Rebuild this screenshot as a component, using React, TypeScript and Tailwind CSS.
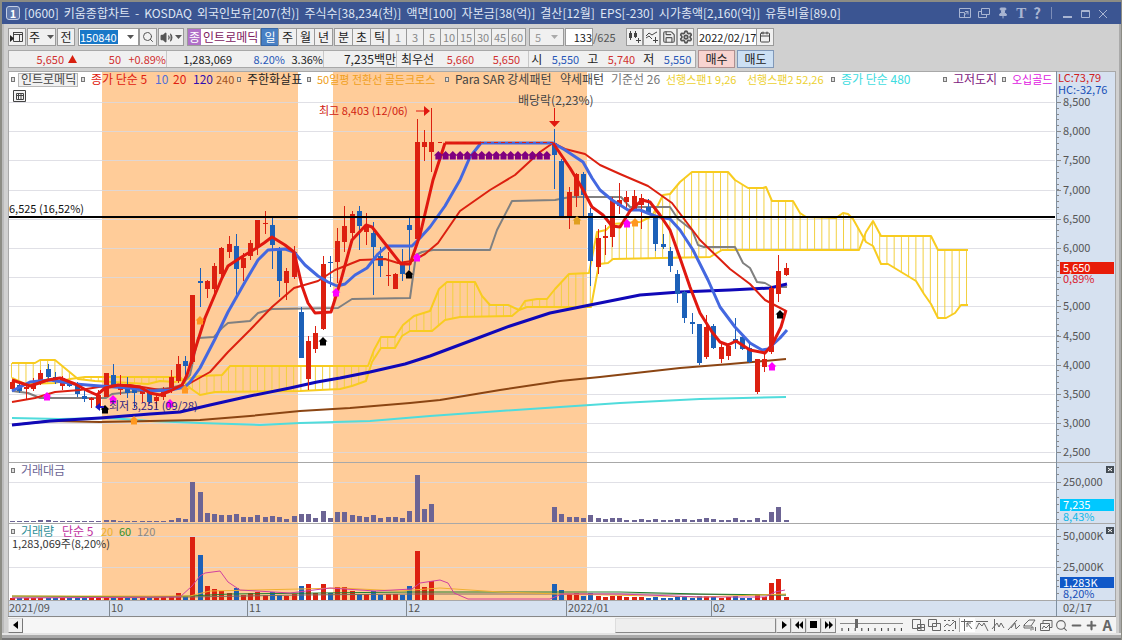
import React from 'react';
import { Search, Save, Settings, Calendar, Volume2, Minus, Plus, Pin } from 'lucide-react';

type Candle = [index: number, high: number, top: number, bottom: number, low: number, up: 0 | 1];
type Point = [number, number];

const UP = '#dc2010';
const DOWN = '#1c60b8';
const STEP = 7.235;
const xAt = (i: number) => 11.5 + i * STEP;

const candles: Candle[] = [
  [0, 380, 382, 389, 391, 1], [1, 384, 385, 391, 393, 0], [2, 383, 387, 389, 399, 1], [3, 378, 384, 389, 391, 1],
  [4, 370, 373, 383, 385, 1], [5, 364, 369, 377, 381, 0], [6, 372, 377, 381, 384, 0], [7, 376, 378, 386, 390, 1],
  [8, 382, 384, 386, 387, 0], [9, 382, 383, 394, 397, 0], [10, 390, 396, 399, 402, 0], [11, 397, 398, 400, 408, 1],
  [12, 390, 395, 407, 408, 1], [13, 373, 373, 397, 397, 1], [14, 364, 375, 387, 388, 0], [15, 375, 388, 390, 395, 1],
  [16, 377, 386, 393, 398, 0], [17, 385, 387, 393, 408, 0], [18, 388, 389, 394, 403, 1], [19, 388, 390, 402, 404, 0],
  [20, 393, 397, 401, 408, 1], [21, 387, 390, 397, 400, 1], [22, 370, 377, 391, 393, 1], [23, 356, 364, 381, 383, 1],
  [24, 356, 361, 366, 378, 0], [25, 295, 295, 362, 364, 1], [26, 268, 281, 283, 307, 0], [27, 280, 281, 289, 298, 1],
  [28, 263, 266, 289, 297, 1], [29, 247, 248, 274, 280, 1], [30, 236, 244, 252, 258, 1], [31, 234, 246, 269, 295, 0],
  [32, 253, 258, 268, 281, 1], [33, 240, 243, 256, 260, 1], [34, 220, 220, 247, 255, 1], [35, 211, 223, 224, 234, 1],
  [36, 217, 225, 245, 269, 0], [37, 247, 249, 281, 297, 0], [38, 268, 271, 283, 300, 1], [39, 246, 252, 277, 279, 1],
  [40, 307, 312, 358, 358, 0], [41, 336, 341, 379, 390, 1], [42, 326, 333, 349, 353, 1], [43, 256, 264, 329, 330, 1],
  [44, 256, 262, 263, 287, 0], [45, 228, 241, 262, 283, 1], [46, 206, 226, 242, 252, 1], [47, 211, 214, 233, 238, 1],
  [48, 206, 211, 226, 250, 0], [49, 213, 225, 232, 245, 1], [50, 222, 233, 247, 295, 0], [51, 247, 256, 266, 277, 0],
  [52, 252, 275, 276, 286, 1], [53, 273, 274, 289, 289, 1], [54, 249, 264, 274, 281, 0], [55, 218, 225, 230, 270, 0],
  [56, 119, 142, 239, 241, 1], [57, 130, 142, 147, 161, 1], [58, 108, 142, 152, 172, 1], [75, 129, 143, 155, 189, 0],
  [76, 159, 161, 217, 218, 0], [77, 187, 192, 217, 229, 1], [78, 173, 174, 196, 207, 1], [79, 172, 174, 195, 217, 0],
  [80, 208, 213, 261, 286, 0], [81, 229, 238, 267, 274, 1], [82, 225, 236, 238, 255, 1], [83, 197, 200, 237, 247, 1],
  [84, 183, 200, 206, 214, 1], [85, 191, 197, 202, 208, 1], [86, 190, 196, 209, 210, 1], [87, 194, 198, 205, 229, 1],
  [88, 199, 207, 214, 215, 0], [89, 215, 218, 244, 251, 0], [90, 234, 244, 247, 249, 0], [91, 247, 251, 266, 272, 0],
  [92, 270, 274, 294, 303, 0], [93, 291, 292, 318, 323, 0], [94, 313, 322, 324, 334, 0], [95, 324, 324, 363, 365, 0],
  [96, 315, 327, 357, 359, 1], [97, 324, 326, 348, 349, 0], [98, 342, 347, 359, 363, 1], [99, 343, 346, 356, 360, 1],
  [100, 318, 339, 341, 349, 0], [101, 335, 337, 349, 350, 0], [102, 343, 348, 362, 363, 0], [103, 359, 359, 392, 394, 1],
  [104, 353, 359, 367, 372, 1], [105, 286, 288, 352, 354, 1], [106, 255, 271, 294, 302, 1], [107, 263, 268, 275, 276, 1],
];

// bar heights, one for each candle
const amounts = [
  1, 1, 1, 1, 2, 2, 1, 1, 1, 1, 1, 1, 1, 2, 2, 1, 1, 1, 1, 1, 1, 1, 2, 4, 3, 40, 30, 9, 8, 7, 7, 8, 5, 5, 7, 5, 6, 5, 3, 6,
  8, 8, 4, 11, 4, 10, 10, 7, 6, 5, 7, 4, 5, 5, 4, 11, 47, 13, 18, 15, 8, 5, 5, 4, 7, 4, 3, 4, 4, 2, 2, 3, 2, 3, 2, 2, 3, 3,
  2, 3, 4, 3, 2, 2, 4, 2, 2, 4, 2, 10, 15, 2,
];
const volumes = [
  2, 2, 2, 2, 2, 2, 2, 2, 2, 2, 2, 2, 2, 2, 2, 2, 2, 2, 2, 2, 2, 3, 3, 7, 4, 63, 45, 14, 11, 9, 7, 12, 5, 7, 8, 5, 8, 5, 4, 6,
  14, 16, 7, 16, 7, 13, 13, 9, 6, 6, 9, 5, 6, 6, 5, 14, 49, 13, 19, 16, 10, 6, 7, 4, 7, 4, 3, 4, 4, 3, 3, 3, 2, 3, 2, 2, 4, 4,
  2, 4, 4, 3, 2, 3, 4, 2, 2, 6, 3, 17, 21, 3,
];

const ma5: Point[] = [[12, 380], [30, 386], [48, 380], [60, 378], [75, 384], [88, 391], [97, 395], [105, 388], [118, 385], [140, 387], [150, 393], [160, 395], [170, 391], [182, 385], [187, 375], [200, 334], [205, 318], [222, 278], [228, 266], [240, 258], [255, 249], [264, 243], [272, 237], [285, 245], [294, 252], [302, 286], [308, 303], [315, 313], [331, 312], [341, 280], [352, 240], [366, 225], [372, 227], [390, 250], [401, 264], [410, 264], [420, 235], [433, 180], [445, 143], [553, 143], [570, 168], [582, 188], [592, 207], [603, 215], [612, 226], [620, 227], [630, 211], [642, 200], [650, 202], [660, 215], [670, 230], [680, 258], [690, 287], [700, 313], [712, 332], [720, 342], [728, 345], [736, 341], [750, 350], [765, 353], [772, 345], [781, 327], [786, 310]];
const ma10: Point[] = [[12, 391], [30, 382], [50, 380], [75, 384], [100, 386], [130, 388], [150, 391], [170, 390], [185, 387], [190, 382], [200, 368], [215, 339], [228, 312], [245, 282], [258, 260], [268, 250], [285, 249], [294, 252], [305, 265], [318, 276], [328, 282], [337, 286], [345, 284], [355, 275], [367, 268], [378, 254], [387, 246], [412, 246], [420, 238], [430, 227], [445, 206], [460, 180], [470, 157], [481, 143], [553, 143], [565, 150], [583, 162], [592, 178], [600, 190], [612, 200], [628, 210], [640, 210], [655, 216], [670, 219], [680, 230], [693, 250], [708, 280], [720, 307], [735, 327], [750, 343], [762, 350], [768, 349], [780, 338], [787, 330]];
const ma20: Point[] = [[12, 402], [35, 398], [55, 392], [80, 390], [105, 386], [130, 385], [160, 390], [185, 386], [210, 372], [228, 352], [250, 330], [272, 307], [294, 288], [318, 281], [335, 270], [360, 260], [385, 259], [398, 263], [412, 261], [425, 254], [438, 243], [460, 211], [490, 190], [515, 175], [540, 152], [553, 143], [565, 149], [585, 154], [600, 165], [620, 174], [648, 186], [672, 203], [700, 240], [730, 269], [750, 284], [765, 300], [786, 311]];
const ma120: Point[] = [[12, 425], [50, 421], [100, 418], [150, 414], [180, 412], [210, 405], [250, 396], [290, 388], [317, 382], [340, 378], [370, 372], [405, 364], [430, 356], [470, 341], [510, 326], [550, 313], [600, 303], [640, 295], [680, 292], [730, 290], [770, 288], [787, 284]];
const ma240: Point[] = [[12, 425], [50, 421], [100, 422], [150, 421], [200, 420], [250, 416], [300, 411], [350, 408], [410, 403], [440, 400], [500, 390], [560, 381], [600, 377], [680, 368], [730, 364], [786, 359]];
const ma480: Point[] = [[12, 418], [60, 419], [110, 418], [150, 421], [200, 423], [260, 425], [300, 423], [370, 421], [430, 416], [500, 411], [560, 407], [620, 403], [700, 399], [786, 397]];
const baseLine: Point[] = [[12, 391], [28, 393], [40, 398], [106, 398], [112, 394], [140, 391], [170, 388], [182, 385], [190, 375], [198, 338], [214, 337], [222, 328], [228, 323], [250, 321], [258, 313], [272, 309], [338, 308], [352, 299], [410, 298], [416, 255], [422, 252], [433, 250], [490, 250], [497, 230], [512, 201], [555, 200], [570, 197], [621, 197], [630, 207], [670, 207], [678, 219], [692, 230], [698, 245], [704, 247], [735, 247], [743, 263], [750, 268], [757, 282], [765, 283], [772, 287], [787, 287]];
const spanA: Point[] = [[12, 363], [35, 363], [40, 360], [55, 360], [78, 379], [95, 381], [148, 384], [160, 381], [175, 382], [187, 379], [200, 376], [222, 375], [230, 366], [368, 366], [374, 350], [381, 337], [395, 337], [403, 325], [414, 316], [430, 311], [439, 289], [447, 282], [475, 282], [482, 296], [490, 305], [508, 305], [519, 310], [525, 301], [537, 299], [547, 299], [555, 289], [569, 274], [589, 273], [597, 232], [606, 230], [612, 224], [640, 222], [652, 216], [658, 205], [663, 195], [670, 194], [680, 182], [692, 172], [728, 172], [735, 180], [748, 188], [763, 188], [766, 187], [772, 201], [793, 201], [800, 213], [806, 217], [836, 218], [843, 213], [848, 214], [853, 219], [866, 242], [873, 246], [881, 264], [888, 264], [916, 281], [924, 294], [931, 304], [938, 318], [946, 318], [955, 313], [961, 305], [968, 305]];
const spanB: Point[] = [[12, 378], [25, 384], [55, 383], [70, 379], [85, 377], [180, 377], [190, 388], [200, 395], [215, 392], [300, 391], [340, 389], [352, 386], [366, 381], [372, 362], [381, 348], [395, 348], [402, 336], [410, 331], [432, 331], [445, 320], [460, 317], [512, 316], [519, 310], [527, 307], [591, 307], [599, 264], [608, 263], [613, 259], [710, 257], [722, 250], [859, 250], [866, 232], [873, 221], [881, 236], [931, 236], [938, 250], [968, 250]];

const volMa5: Point[] = [[12, 598], [180, 597], [192, 586], [200, 576], [205, 573], [220, 571], [228, 582], [240, 590], [290, 593], [330, 588], [375, 591], [412, 589], [420, 583], [440, 580], [448, 583], [454, 593], [468, 599], [550, 599], [562, 594], [620, 594], [700, 597], [765, 597], [775, 592], [785, 590]];
const volMa20: Point[] = [[12, 596], [190, 596], [210, 591], [300, 589], [340, 588], [400, 591], [440, 588], [500, 592], [560, 594], [700, 597], [786, 594]];
const volMa60: Point[] = [[12, 596], [150, 597], [190, 596], [230, 594], [410, 592], [500, 592], [620, 592], [700, 594], [786, 595]];
const volMa120: Point[] = [[12, 597], [190, 597], [300, 595], [410, 594], [560, 594], [650, 594], [786, 595]];

const yOn = (line: Point[], x: number) => {
  for (let i = 1; i < line.length; i++) {
    const [x0, y0] = line[i - 1];
    const [x1, y1] = line[i];
    if (x <= x1) return y0 + ((y1 - y0) * (x - x0)) / (x1 - x0);
  }
  return line[line.length - 1][1];
};

const prices = ['8,500', '8,000', '7,500', '7,000', '6,500', '6,000', '5,500', '5,000', '4,500', '4,000', '3,500', '3,000', '2,500'];
const priceY = (i: number) => 102 + i * 29.2;

const legend: [number, string, string][] = [
  [21, '인트로메딕', '#444'], [91, '종가 단순 5', '#e02010'], [155, '10', '#5070d8'], [173, '20', '#e02010'], [193, '120', '#3010b0'],
  [247, '주한화살표', '#222'], [455, 'Para SAR 강세패턴', '#444'], [560, '약세패턴', '#444'], [611, '기준선 26', '#777'],
  [841, '종가 단순 480', '#40dce0'], [953, '고저도지', '#802080'],
];
const smallLegend: [number, string, string][] = [
  [216, '240', '#a05020'], [317, '50일평 전환선 골든크로스', '#f0a020'], [666, '선행스팬1 9,26', '#ecd030'],
  [747, '선행스팬2 52,26', '#ecd030'], [1012, '오십골드', '#e020e0'],
];
const legendBoxes = [13, 83, 239, 309, 447, 833, 945, 1004];

const arrows: [number, number, string][] = [
  [105, 409, '#000'], [323, 341, '#000'], [409, 274, '#000'], [780, 314, '#000'],
  [47, 396, '#ff00ff'], [113, 399, '#ff00ff'], [170, 403, '#ff00ff'], [336, 292, '#ff00ff'], [417, 257, '#ff00ff'], [627, 223, '#ff00ff'], [772, 366, '#ff00ff'],
  [134, 420, '#ff9820'], [200, 320, '#ff9820'], [185, 389, '#ff9820'], [577, 220, '#e0a020'], [635, 222, '#ff9820'],
];

function Line({ points, color, width = 1 }: { points: Point[]; color: string; width?: number }) {
  return <polyline points={points.map(p => p.join(',')).join(' ')} fill="none" stroke={color} strokeWidth={width} strokeLinejoin="round" />;
}

function UpArrow({ x, y, color }: { x: number; y: number; color: string }) {
  return <path d={`M${x} ${y - 4}l4.500 4.500h-1.500v4h-6v-4h-1.500z`} fill={color} />;
}

function Chart() {
  return (
    <svg viewBox="8 71 1108 546" className="block h-auto w-full text-[11px]" role="img" aria-label="인트로메딕 일봉 차트">
      <g shapeRendering="crispEdges">
        <rect x="8" y="71" width="1048" height="530" fill="#fff" />
        <rect x="102" y="71" width="196" height="530" fill="#ffcc99" />
        <rect x="333" y="71" width="254" height="530" fill="#ffcc99" />
        <rect x="1056" y="71" width="60" height="546" fill="#d6e1f0" />
        <rect x="8" y="601" width="1108" height="16" fill="#d6e1f0" />
        {prices.map((p, i) => (
          <rect key={p} x="8" y={Math.round(priceY(i))} width="1047" height="1" fill="#d8d8e0" opacity="0.8" />
        ))}
        {[482, 536, 567].map(y => (
          <rect key={y} x="8" y={y} width="1047" height="1" fill="#d8d8e0" opacity="0.8" />
        ))}
      </g>

      {Array.from({ length: 133 }, (_, i) => xAt(i)).filter(x => x <= 969).map(x => (
        <path key={x} d={`M${x} ${yOn(spanA, x)}V${yOn(spanB, x)}`} stroke="#f2d040" strokeWidth="1" />
      ))}
      <Line points={spanA} color="#f8cc20" width={2} />
      <Line points={spanB} color="#f8cc20" width={2} />
      <Line points={baseLine} color="#808080" width={2} />
      <Line points={ma480} color="#50dcdc" width={2} />
      <Line points={ma240} color="#8b4513" width={2} />
      <Line points={ma120} color="#1008b8" width={3} />

      <g shapeRendering="crispEdges">
        {candles.map(([i, high, top, bottom, low, up]) => {
          const x = Math.round(xAt(i));
          return (
            <g key={i} fill={up ? UP : DOWN}>
              <rect x={x} y={high} width="1" height={low - high} />
              <rect x={x - 2} y={top} width="5" height={bottom - top} />
            </g>
          );
        })}
      </g>
      <Line points={ma20} color={UP} width={2} />
      <Line points={ma10} color="#4468e0" width={3} />
      <Line points={ma5.filter(([x]) => x <= 445)} color="#e01810" width={3} />
      <Line points={ma5.filter(([x]) => x >= 553)} color="#e01810" width={3} />
      <path d="M445 143h36" stroke="#e01810" strokeWidth="3" />
      <path d="M438 142.500h115" stroke={UP} strokeDasharray="4 3" />
      <rect x="8" y="216" width="1047" height="2" fill="#000" />

      {arrows.map(([x, y, color]) => <UpArrow key={`${x}-${y}`} x={x} y={y} color={color} />)}
      {Array.from({ length: 16 }, (_, i) => <UpArrow key={i} x={xAt(59 + i)} y={155} color="#800080" />)}
      <path d="M95 407l5-4v3h4v2h-4v3z" fill="#2018c0" />
      <path d="M416 110.500h8v-4.500l6 5-6 5v-4.500h-8z" fill="#e01810" />
      <path d="M554 108h1v13h5l-5.500 6-5.500-6h5z" fill="#e01810" />

      <text x="319" y="115" fill="#d02010">최고 8,403 (12/06)</text>
      <text x="109" y="410" fill="#302080">최저 3,251 (09/28)</text>
      <text x="518" y="105" fill="#444" className="text-[12px]">배당락(2,23%)</text>
      <text x="9" y="213" fill="#111">6,525 (16,52%)</text>

      <rect x="18.500" y="73.500" width="59" height="13" fill="#f0f0f0" stroke="#b8b8b8" />
      <g className="text-[12px]">
        {legend.map(([x, label, color]) => <text key={x} x={x} y="84" fill={color}>{label}</text>)}
      </g>
      {smallLegend.map(([x, label, color]) => <text key={x} x={x} y="84" fill={color}>{label}</text>)}
      {legendBoxes.map(x => <rect key={x} x={x - 1.500} y="77.500" width="3" height="4" fill="#ddd" stroke="#777" />)}
      <path d="M13.500 90.500h12v11h-12zM16.500 93.500h7v6h-7zM18.500 93v6M21 93v6M16 95.500h7" fill="#f4f4f4" stroke="#444" />

      <g shapeRendering="crispEdges">
        {candles.map(([i, , , , , up], n) => {
          const x = Math.round(xAt(i)) - 2;
          return (
            <g key={i}>
              <rect x={x} y={522 - amounts[n]} width="5" height={amounts[n]} fill="#6c6494" />
              <rect x={x} y={600 - volumes[n]} width="5" height={volumes[n]} fill={up ? UP : DOWN} />
            </g>
          );
        })}
      </g>
      <Line points={volMa120} color="#807060" />
      <Line points={volMa60} color="#208030" />
      <Line points={volMa20} color="#f0b030" />
      <Line points={volMa5} color="#d040a0" />

      <rect x="11.500" y="468.500" width="3" height="4" fill="#ddd" stroke="#777" />
      <rect x="11.500" y="529.500" width="3" height="4" fill="#ddd" stroke="#777" />
      <g className="text-[12px]">
        <text x="21" y="475" fill="#6c6494">거래대금</text>
        <text x="21" y="536" fill="#309098">거래량</text>
        <text x="62" y="536" fill="#c030a0">단순 5</text>
      </g>
      <text x="101" y="536" fill="#e8b030">20</text>
      <text x="119" y="536" fill="#309030">60</text>
      <text x="137" y="536" fill="#888">120</text>
      <text x="12" y="548" fill="#333">1,283,069주(8,20%)</text>

      <g shapeRendering="crispEdges" fill="#a8a8a8">
        <rect x="8" y="71" width="1108" height="1" />
        <rect x="8" y="71" width="1" height="546" />
        <rect x="8" y="462" width="1108" height="1" />
        <rect x="8" y="523" width="1108" height="1" />
        <rect x="8" y="600" width="1108" height="1" />
        <rect x="1056" y="71" width="1" height="546" fill="#8090a0" />
        <rect x="1115" y="71" width="1" height="546" />
        <rect x="8" y="616" width="1108" height="1" fill="#888" />
        {[109, 247, 406, 566, 711].map(x => <rect key={x} x={x} y="601" width="1" height="16" fill="#808890" />)}
        {prices.map((p, i) => <rect key={p} x="1057" y={Math.round(priceY(i))} width="4" height="1" fill="#888" />)}
        {Array.from({ length: 62 }, (_, i) => <rect key={i} x="1057" y={Math.round(96 + i * 5.84)} width="2" height="1" fill="#888" />)}
        {[467, 474, 489, 497, 504, 512, 519, 529, 543, 549, 555, 561, 574, 580, 586, 593].map(y => <rect key={y} x="1057" y={y} width="2" height="1" fill="#888" />)}
        {[482, 536, 567].map(y => <rect key={y} x="1057" y={y} width="4" height="1" fill="#888" />)}
      </g>

      <g fill="#555">
        <text x="1058" y="82" fill="#d02020">LC:73,79</text>
        <text x="1058" y="94" fill="#1850b8">HC:-32,76</text>
        {prices.map((p, i) => p !== '5,500' && <text key={p} x="1063" y={priceY(i) + 4}>{p}</text>)}
        <rect x="1060" y="262" width="54" height="12" fill="#e81c08" />
        <text x="1063" y="272" fill="#fff">5,650</text>
        <text x="1063" y="283" fill="#d82030">0,89%</text>
        <text x="1063" y="486">250,000</text>
        <rect x="1060" y="499" width="54" height="12" fill="#00c8ff" />
        <text x="1063" y="509" fill="#fff">7,235</text>
        <text x="1063" y="521" fill="#10b8e8">8,43%</text>
        <text x="1063" y="540">50,000K</text>
        <text x="1063" y="571">25,000K</text>
        <rect x="1060" y="577" width="54" height="11" fill="#1058c8" />
        <text x="1063" y="587" fill="#fff">1,283K</text>
        <text x="1063" y="598" fill="#1850b8">8,20%</text>
        <text x="1063" y="612">02/17</text>
        <text x="9" y="612">2021/09</text>
        <text x="111" y="612">10</text>
        <text x="249" y="612">11</text>
        <text x="408" y="612">12</text>
        <text x="568" y="612">2022/01</text>
        <text x="713" y="612">02</text>
      </g>
      {[466, 527].map(y => (
        <g key={y}>
          <rect x="1106" y={y} width="8" height="7" fill="#444c54" />
          <path d={`M1108 ${y + 2}l4 3m0 -3l-4 3`} stroke="#fff" />
        </g>
      ))}
    </svg>
  );
}

const box = 'flex h-[18px] items-center justify-center border border-[#9a9a9a] bg-[#f0f0f0]';

const titleParts = [
  '[0600]', '키움종합차트', '-', 'KOSDAQ', '외국인보유[207(천)]', '주식수[38,234(천)]', '액면[100]', '자본금[38(억)]',
  '결산[12월]', 'EPS[-230]', '시가총액[2,160(억)]', '유통비율[89.0]',
];

function Arrow() {
  return <svg viewBox="0 0 7 4" className="h-1 w-[7px] shrink-0"><path d="M0 0h7L3.500 4z" fill="#555" /></svg>;
}

function TitleBar() {
  return (
    <header className="flex h-[22px] items-center bg-[#3b5592] pr-3 pl-1 text-[#dfe6f4]">
      <span className="mr-1 flex size-[14px] items-center justify-center rounded-[3px] border border-[#c4cee4] bg-[#6078ac] text-[11px] font-bold text-white">1</span>
      <h1 className="flex grow gap-[5px] overflow-hidden whitespace-nowrap">
        {titleParts.map(part => <span key={part}>{part}</span>)}
      </h1>
      <div className="flex items-center gap-[7px] text-[#a9b5d2]">
        <button aria-label="크기"><svg viewBox="0 0 12 12" className="size-3" fill="none" stroke="currentColor"><path d="M.5 1.500h11v9H.5zM.5 5.500h5v5M6 4.500h3v3M9 4.500l-4 4" /></svg></button>
        <button aria-label="복사"><svg viewBox="0 0 12 12" className="size-3" fill="none" stroke="currentColor"><path d="M3.500 1.500h8v6h-8zM3 4.500H.5v6h8V8" /></svg></button>
        <button aria-label="고정"><Pin size={12} fill="currentColor" /></button>
        <button aria-label="글꼴" className="font-['Liberation_Serif',serif] text-[15px] leading-4 font-bold">T</button>
        <button aria-label="도움말" className="text-[15px] leading-4 font-bold">?</button>
        <span className="mx-[3px] h-3 w-px bg-[#7c8db8]" />
        <button aria-label="최소화"><svg viewBox="0 0 11 11" className="size-[11px]"><path d="M1 9h9" stroke="currentColor" strokeWidth="2" /></svg></button>
        <button aria-label="최대화"><svg viewBox="0 0 11 11" className="size-[11px]" fill="none" stroke="currentColor"><path d="M1.500 2.500h8v7h-8zM1.500 3.500h8" /></svg></button>
        <button aria-label="닫기"><svg viewBox="0 0 11 11" className="size-[11px]" stroke="currentColor"><path d="M1 2l8 8M9 2l-8 8" /></svg></button>
      </div>
    </header>
  );
}

function Toolbar() {
  return (
    <div className="flex h-[18px] text-[#222]">
      <button className={`${box} mr-px w-[18px]`} aria-label="패널">
        <svg viewBox="0 0 14 12" className="h-3 w-3.5" fill="none" stroke="#444"><path d="M3.500 1v9.500h9v-9h-9M3 3.500h10M9.500 3v7" /><path d="M0 4l4 3.500L0 11z" fill="#222" stroke="none" /></svg>
      </button>
      <div className={`${box} mr-px w-[29px] gap-1`}>
        <select aria-label="종목 구분" className="w-[14px] appearance-none bg-transparent"><option>주</option></select>
        <Arrow />
      </div>
      <button className={`${box} mr-[3px] w-[18px]`}>전</button>
      <div className="flex h-[18px] w-[61px] items-center border border-[#9a9a9a] bg-white pr-1 pl-px">
        <input aria-label="종목코드" defaultValue="150840" className="mr-auto h-[14px] w-[38px] bg-[#1878c8] text-[11px] text-white" />
        <Arrow />
      </div>
      <button className={`${box} mr-px w-[18px] text-[#555]`} aria-label="검색"><Search size={12} /></button>
      <button className={`${box} mr-[3px] w-[26px] gap-0.5 text-[#555]`} aria-label="소리"><Volume2 size={13} fill="currentColor" /><Arrow /></button>
      <div className="flex h-[18px] w-[74px] items-center border border-[#9a9a9a] bg-white text-[#802060]">
        <span className="mr-0.5 bg-[#b070c8] px-px text-white">종</span>
        <span className="whitespace-nowrap">인트로메딕</span>
      </div>
      {['일', '주', '월', '년'].map((p, i) => (
        <button key={p} className={i === 0 ? 'h-[18px] w-[18px] border border-[#3868a8] bg-[#4880c4] text-white' : `${box} -ml-px w-[19px]`}>{p}</button>
      ))}
      <span className="w-px" />
      {['분', '초', '틱'].map(p => <button key={p} className={`${box} -mr-px w-[19px]`}>{p}</button>)}
      <span className="w-px" />
      {[1, 3, 5, 10, 15, 30, 45, 60].map(n => <button key={n} className={`${box} -mr-px w-[18px] text-[11px] text-[#888]`}>{n}</button>)}
      <div className={`${box} mr-px ml-1 w-[35px] gap-2 text-[11px] text-[#999]`}>
        <select aria-label="분 단위" className="w-2 appearance-none bg-transparent"><option>5</option></select>
        <svg viewBox="0 0 7 4" className="h-1 w-[7px] shrink-0"><path d="M0 0h7L3.500 4z" fill="#aaa" /></svg>
      </div>
      <input aria-label="표시 봉수" defaultValue="133" className="h-[18px] w-[28px] border border-[#9a9a9a] bg-white text-right text-[11px]" />
      <span className="mr-2 flex w-[25px] items-center text-[11px] text-[#555]">/625</span>
      <button className={`${box} w-[17px]`} aria-label="차트 추가">
        <svg viewBox="0 0 14 14" className="size-3.5" fill="#444"><path d="M1 3h1V1h1v2h1v5H3v2H2V8H1zM6 3h1V1h1v2h1v4H8v1H7V7H6zM10 8h1v2h2v1h-2v2h-1v-2H8v-1h2z" /></svg>
      </button>
      <button className={`${box} w-[17px]`} aria-label="지표 추가">
        <svg viewBox="0 0 14 14" className="size-3.5" fill="none" stroke="#444"><path d="M1 6l3-3 3 2 3-2 2-1M1 8l3-2 3 3M10.500 7v6M8 10.500h5" /></svg>
      </button>
      <button className={`${box} w-[17px] text-[#555]`} aria-label="저장"><Save size={14} /></button>
      <button className={`${box} mr-[3px] w-[17px] text-[#555]`} aria-label="설정"><Settings size={14} strokeWidth={3} /></button>
      <input aria-label="날짜" defaultValue="2022/02/17" className="h-[18px] w-[60px] border border-[#9a9a9a] bg-white pl-px text-[11px]" />
      <button className={`${box} -ml-px w-[18px] text-[#444]`} aria-label="달력"><Calendar size={12} /></button>
    </div>
  );
}

function QuoteRow() {
  return (
    <div className="mt-1 flex h-[18px] text-[#222]">
      <dl className="mr-0.5 flex h-[18px] w-[688px] items-center border border-[#a8a8a8] bg-[#f0f0f0] text-[11px] whitespace-nowrap text-[#222]">
        <dd className="flex w-[158px] items-center justify-end border-r border-[#c8c8c8] text-[#d03030]">
          <span className="mr-1">5,650</span>
          <svg viewBox="0 0 9 8" className="h-2 w-[9px]"><path d="M4.500 0L9 8H0z" fill="#d82010" /></svg>
          <span className="w-[44px] text-right">50</span>
          <span className="w-[45px] text-right">+0.89%</span>
        </dd>
        <dd className="flex w-[157px] justify-end border-r border-[#c8c8c8]">
          <span>1,283,069</span>
          <span className="w-[53px] text-right text-[#2858b8]">8.20%</span>
          <span className="w-[38px] text-right">3.36%</span>
        </dd>
        <dd className="w-[73px] border-r border-[#c8c8c8] text-right text-[12px]">7,235백만</dd>
        <dt className="ml-1 text-[12px]">최우선</dt>
        <dd className="w-[40px] text-right text-[#d03030]">5,660</dd>
        <dd className="mr-2 w-[46px] text-right text-[#d03030]">5,650</dd>
        <dt className="border-l border-[#c8c8c8] pl-0.5 text-[12px]">시</dt>
        <dd className="mr-2 w-[37px] text-right text-[#2858b8]">5,550</dd>
        <dt className="text-[12px]">고</dt>
        <dd className="mr-2 w-[37px] text-right text-[#d03030]">5,740</dd>
        <dt className="text-[12px]">저</dt>
        <dd className="w-[37px] text-right text-[#2858b8]">5,550</dd>
      </dl>
      <button className="mr-0.5 w-[37px] border border-[#b09090] bg-[#f8d4d0]">매수</button>
      <button className="w-[37px] border border-[#8098b8] bg-[#cce0f4]">매도</button>
    </div>
  );
}

const tools: [string, string][] = [
  ['새 창', 'M1.500 1.500h8v9h-8zM6.500 6.500h7v6h-7zM10 7v5M7 9.500h6'],
  ['겹침', 'M1.500 1.500h8v7h-8zM5.500 5.500h8v7h-8z'],
  ['추세', 'M1 2.500h2M5 2.500h2M9 2.500h2M1 12.500h2M5 12.500h2M9 12.500h2M1 9l3-3 3 2 5-5M12.500 3v8'],
  ['십자선', 'M1 3.500h12M4.500 1v12M7 5l5 6M7 9V5h4'],
  ['수평선', 'M1 3.500h12M1 11l3-6 3 3 2-3 4 8'],
  ['수직선', 'M3.500 1v12M1 11l5-6 2 4 2-4 3 5'],
  ['추세선', 'M1 12L10 2M4 10l4-5 1 6 4-4'],
  ['지우개', 'M1 7l5-5h6l-4 6H2zM1 7v3h6M8 12.500V9h2v3M12.500 9v4'],
  ['이미지', 'M1.500 5.500h9v7h-9zM4 5V2.500h9v7h-2M3 11l2-3 2 2 3-3'],
];

function BottomBar() {
  return (
    <div className="flex h-4 items-center bg-[#f3f3f3] text-[#666]">
      <button className="flex size-[15px] shrink-0 items-center justify-center border border-r-[#777] border-b-[#777] border-[#ddd] bg-[#f0f0f0]" aria-label="왼쪽">
        <svg viewBox="0 0 8 8" className="size-2"><path d="M6 0v8L1 4z" fill="#000" /></svg>
      </button>
      <div className="flex h-[15px] grow justify-end bg-[#f6f6f6]">
        <div className="w-[161px] border border-r-[#888] border-b-[#888] border-[#ddd] bg-[#eee]" />
      </div>
      {[['재생', 'M2 0l5 4-5 4z'], ['뒤로', 'M4 0v8L0 4zM8 0v8L4 4z'], ['정지', 'M0 0h7v7H0z'], ['앞으로', 'M0 0l4 4-4 4zM4 0l4 4-4 4z']].map(([label, d]) => (
        <button key={label} aria-label={label} className="flex size-[15px] shrink-0 items-center justify-center border border-r-[#888] border-b-[#888] border-[#ddd] bg-[#f0f0f0]">
          <svg viewBox="0 0 8 8" className="size-2"><path d={d} fill="#000" /></svg>
        </button>
      ))}
      <div className="mr-2 ml-1 flex w-[63px] flex-col">
        <input type="range" aria-label="확대" defaultValue={24} className="h-[9px] w-full appearance-none bg-[linear-gradient(#888,#888)] bg-[length:100%_1px] bg-center bg-no-repeat [&::-webkit-slider-thumb]:h-[9px] [&::-webkit-slider-thumb]:w-[3px] [&::-webkit-slider-thumb]:appearance-none [&::-webkit-slider-thumb]:bg-[#666]" />
        <svg viewBox="0 0 62 3" className="h-[3px]"><path d="M1 1.500h61" stroke="#333" strokeWidth="3" strokeDasharray="1 5.600" /></svg>
      </div>
      {tools.map(([label, d], i) => (
        <button key={label} aria-label={label} className={i === 3 ? 'border-l border-[#aaa] bg-white' : 'pr-px'}>
          <svg viewBox="0 0 15 14" className="h-3.5 w-[15px]" fill="none" stroke="currentColor"><path d={d} /></svg>
        </button>
      ))}
      <button aria-label="돋보기" className="mr-0.5"><Search size={13} /></button>
      <button aria-label="축소" className="mr-0.5"><Minus size={13} strokeWidth={4} /></button>
      <button aria-label="확대" className="mr-1"><Plus size={13} strokeWidth={4} /></button>
      <button aria-label="자동" className="mr-1 text-[15px] leading-4 font-bold">A</button>
    </div>
  );
}

export default function App() {
  return (
    <div className="overflow-hidden border-t-2 border-r border-l-2 border-[#8c8c84] bg-[#d0d0d0] font-['Noto_Sans_CJK_KR',sans-serif] text-[12px] leading-4">
      <TitleBar />
      <main className="border-r-2 border-l-2 border-[#aaa] border-l-[#bbb] pt-1 pr-[3px] pl-1">
        <Toolbar />
        <QuoteRow />
        <div className="mt-[3px]">
          <Chart />
        </div>
        <BottomBar />
      </main>
      <footer className="h-[7px] border-t-2 border-b-2 border-t-[#e4e4e4] border-b-[#777] bg-[#aaa]" />
    </div>
  );
}
